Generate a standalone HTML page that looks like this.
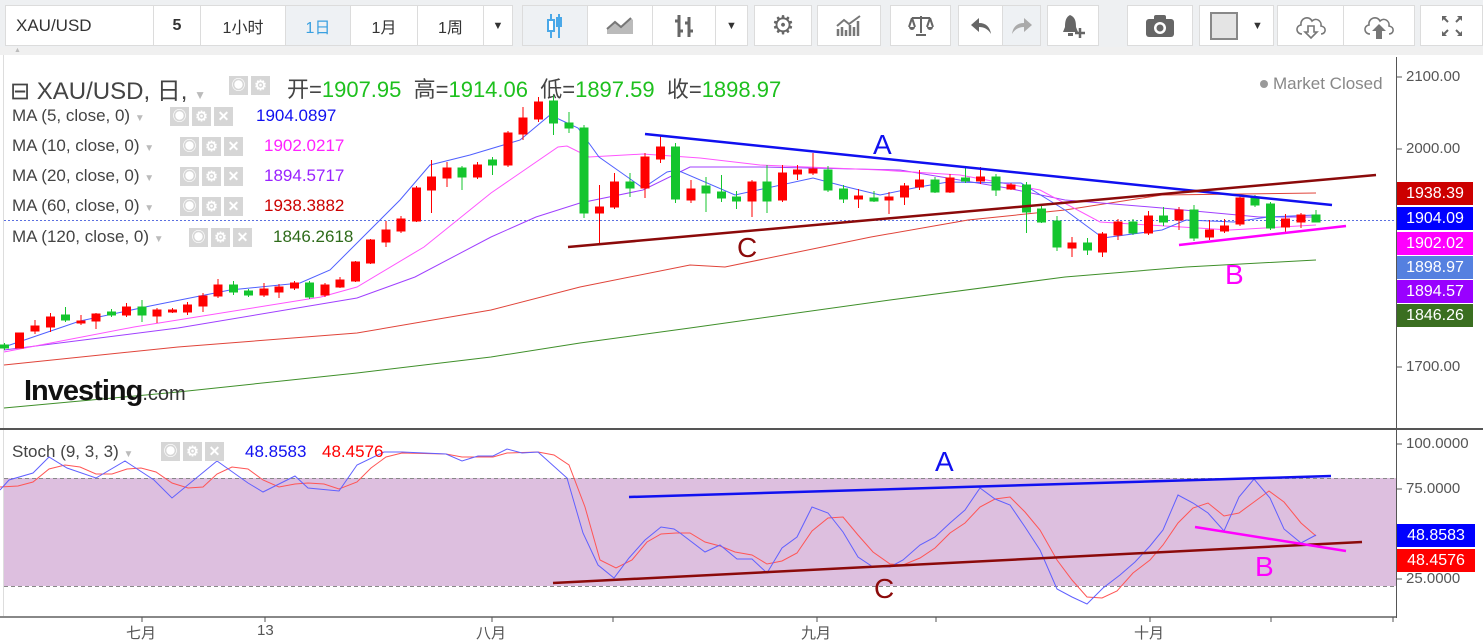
<!DOCTYPE html>
<html><head><meta charset="utf-8"><style>
body{margin:0;width:1483px;height:642px;overflow:hidden;background:#fff;font-family:"Liberation Sans","Noto Sans CJK SC",sans-serif;position:relative}
.t{position:absolute;white-space:nowrap}
.n{font-family:"Liberation Sans Narrow","Liberation Sans","Noto Sans CJK SC",sans-serif}
.tb{position:absolute;top:0;left:0;width:1483px;height:55px;background:#eef0f2}
.b{position:absolute;top:5px;height:41px;background:#fff;border:1px solid #dcdcdc;box-sizing:border-box;display:flex;align-items:center;justify-content:center;font-size:16px;color:#333}
.sel{background:#eef1f4}
.ax{font-size:15px;color:#555}
.lab{position:absolute;left:1397px;width:76px;height:23px;color:#fff;font-size:16px;line-height:23px;text-align:center}
.ic{display:inline-block;width:19px;height:19px;background:#d6d6d6;margin-right:3px;vertical-align:middle;color:#fff;font-size:14px;line-height:19px;text-align:center;font-weight:bold}
</style></head><body>
<div class="tb"></div>
<div class="b n" style="left:5px;width:149px;justify-content:flex-start;padding-left:10px;font-size:17px">XAU/USD</div>
<div class="b" style="left:153px;width:48px;font-weight:bold">5</div>
<div class="b" style="left:200px;width:86px">1小时</div>
<div class="b sel" style="left:285px;width:66px;color:#3aa0e0">1日</div>
<div class="b" style="left:350px;width:68px">1月</div>
<div class="b" style="left:417px;width:67px">1周</div>
<div class="b" style="left:483px;width:30px;font-size:11px">▼</div>
<div class="b sel" style="left:522px;width:66px"><svg width="22" height="26"><path d="M7 1V25M15 1V25" stroke="#4aa8e8" stroke-width="2"/><rect x="4" y="7" width="6" height="11" fill="#fff" stroke="#4aa8e8" stroke-width="2"/><rect x="12" y="4" width="6" height="10" fill="#4aa8e8"/></svg></div>
<div class="b" style="left:587px;width:66px"><svg width="28" height="18"><path d="M1 17L1 12 9 5 15 10 25 1 27 3V17Z" fill="#bbb"/><path d="M1 12L9 5 15 10 25 1" stroke="#777" stroke-width="2" fill="none"/></svg></div>
<div class="b" style="left:652px;width:64px"><svg width="22" height="26"><path d="M6 2V24M6 8H2M16 4V24M16 18H20M6 18H10M16 10H12" stroke="#666" stroke-width="3" fill="none"/></svg></div>
<div class="b" style="left:715px;width:33px;font-size:11px">▼</div>
<div class="b" style="left:754px;width:58px;font-size:26px;color:#666">⚙</div>
<div class="b" style="left:817px;width:64px"><svg width="26" height="22"><path d="M2 21V14M6 21V12M10 21V15M14 21V10M18 21V12M22 21V6" stroke="#777" stroke-width="2.5"/><path d="M1 11L8 5 13 9 24 1" stroke="#777" stroke-width="2" fill="none"/></svg></div>
<div class="b" style="left:890px;width:61px"><svg width="26" height="22"><path d="M13 1V18M4 3H22M4 3L1 12M4 3L7 12M22 3L19 12M22 3L25 12M8 20H18" stroke="#666" stroke-width="2" fill="none"/><path d="M1 12A3 3 0 0 0 7 12ZM19 12A3 3 0 0 0 25 12Z" fill="#666"/></svg></div>
<div class="b" style="left:958px;width:45px"><svg width="22" height="18"><path d="M9 1L1 8 9 15V10C14 10 18 12 21 17 20 10 16 6 9 6Z" fill="#666"/></svg></div>
<div class="b sel" style="left:1002px;width:39px"><svg width="22" height="18"><path d="M13 1L21 8 13 15V10C8 10 4 12 1 17 2 10 6 6 13 6Z" fill="#aaa"/></svg></div>
<div class="b" style="left:1047px;width:52px"><svg width="24" height="26"><path d="M9 2C5 4 4 8 4 14L2 19H17L15 14C15 8 14 4 9 2Z" fill="#666"/><rect x="7" y="20" width="5" height="3" fill="#666"/><path d="M19 15V25M14 20H24" stroke="#666" stroke-width="2.5"/></svg></div>
<div class="b" style="left:1127px;width:66px"><svg width="30" height="24"><rect x="1" y="5" width="28" height="18" rx="3" fill="#666"/><rect x="9" y="1" width="12" height="6" rx="2" fill="#666"/><circle cx="15" cy="14" r="6" fill="#fff"/><circle cx="15" cy="14" r="3.5" fill="#666"/></svg></div>
<div class="b" style="left:1199px;width:75px;justify-content:flex-start;padding-left:10px"><span style="display:inline-block;width:24px;height:24px;background:#e4e4e4;border:2px solid #888"></span><span style="font-size:11px;margin-left:14px">▼</span></div>
<div class="b" style="left:1277px;width:67px"><svg width="34" height="28"><path d="M8 22C2 22 1 14 7 13 6 6 15 3 18 9 22 5 28 9 27 14 33 15 32 22 27 22" fill="none" stroke="#777" stroke-width="1.6"/><path d="M14 14H20V20H23L17 26 11 20H14Z" fill="#fff" stroke="#777" stroke-width="1.6"/></svg></div>
<div class="b" style="left:1343px;width:72px"><svg width="34" height="28"><path d="M8 22C2 22 1 14 7 13 6 6 15 3 18 9 22 5 28 9 27 14 33 15 32 22 27 22" fill="none" stroke="#777" stroke-width="1.6"/><path d="M14 27V19H10L17 12 24 19H20V27Z" fill="#777"/></svg></div>
<div class="b" style="left:1420px;width:63px"><svg width="22" height="22"><path d="M1 1H6L1 6ZM21 1H16L21 6ZM1 21H6L1 16ZM21 21H16L21 16Z" fill="#666"/><path d="M2 2L7 7M20 2L15 7M2 20L7 15M20 20L15 15" stroke="#666" stroke-width="2"/></svg></div>
<div class="t" style="left:0;top:47px;width:1483px;height:8px;background:#f0f0f0"></div>
<div class="t" style="left:14px;top:47px;font-size:7px;color:#bbb">▲</div>

<svg class="t" style="left:0;top:0" width="1483" height="642">
<rect x="0" y="55" width="1483" height="587" fill="#fff"/>
<line x1="3.5" y1="55" x2="3.5" y2="617" stroke="#ddd"/>
<rect x="4" y="478" width="1392" height="108" fill="#ddbfdf"/>
<line x1="4" y1="478.5" x2="1396" y2="478.5" stroke="#888" stroke-dasharray="4,3"/>
<line x1="4" y1="586.5" x2="1396" y2="586.5" stroke="#888" stroke-dasharray="4,3"/>
<line x1="0" y1="429" x2="1483" y2="429" stroke="#555" stroke-width="2"/>
<line x1="0" y1="617" x2="1396" y2="617" stroke="#888" stroke-width="2"/>
<line x1="1396.5" y1="57" x2="1396.5" y2="618" stroke="#555"/>
<g stroke="#555"><line x1="1397" y1="77" x2="1402" y2="77"/><line x1="1397" y1="149" x2="1402" y2="149"/><line x1="1397" y1="367" x2="1402" y2="367"/><line x1="1397" y1="444" x2="1402" y2="444"/><line x1="1397" y1="489" x2="1402" y2="489"/><line x1="1397" y1="579" x2="1402" y2="579"/>
<line x1="142" y1="617" x2="142" y2="622"/><line x1="265" y1="617" x2="265" y2="622"/><line x1="492" y1="617" x2="492" y2="622"/><line x1="613" y1="617" x2="613" y2="622"/><line x1="817" y1="617" x2="817" y2="622"/><line x1="936" y1="617" x2="936" y2="622"/><line x1="1150" y1="617" x2="1150" y2="622"/><line x1="1271" y1="617" x2="1271" y2="622"/><line x1="1393" y1="617" x2="1393" y2="622"/></g>
<line x1="4" y1="220.5" x2="1396" y2="220.5" stroke="#5a6fe0" stroke-dasharray="2,2"/>
<g fill="none" stroke-width="1">
<polyline stroke="#3f8f2a" points="4,408 178,392 357,373 491,357 580,343 690,328 890,300 1065,277 1186,267 1316,260"/>
<polyline stroke="#e0443a" points="4,365 178,347 357,333 491,310 580,287 690,265 725,267 871,237 968,220 1065,210 1162,195 1316,193"/>
<polyline stroke="#a040ff" points="4,350 178,328 357,298 415,277 491,237 536,217 580,203 643,190 690,167 760,167 900,170 1007,188 1065,200 1162,208 1259,217 1316,217"/>
<polyline stroke="#ff55ff" points="4,352 134,327 321,297 357,287 424,247 491,193 558,147 567,146 589,157 643,154 700,158 760,165 880,170 960,175 1040,190 1100,222 1230,230 1316,225"/>
<polyline stroke="#5060ff" points="4,347 80,321 150,306 230,290 300,283 330,270 360,240 400,200 430,165 470,155 520,140 550,115 578,128 599,157 643,188 667,172 677,170 735,195 813,178 847,187 880,195 919,187 948,182 1007,183 1021,183 1065,210 1103,238 1162,230 1186,220 1234,222 1268,217 1316,215"/>
</g>
<g fill="#f00" stroke="#f00" stroke-width="1">
<path d="M19.5 333V348M15.5 333h8V348h-8Z M35 320V334M31 326h8V331h-8Z M50.5 313V332M46.5 317h8V327h-8Z M81 315V325M77 321h8V323h-8Z M96 313V329M92 314h8V321h-8Z M126.5 303V317M122.5 307h8V315h-8Z M157 308V323M153 310h8V316h-8Z M172.5 308V313M168.5 310h8V312h-8Z M187.5 302V315M183.5 305h8V312h-8Z M203 293V312M199 296h8V306h-8Z M218 279V298M214 285h8V296h-8Z M264 283V297M260 289h8V295h-8Z M279 284V298M275 287h8V292h-8Z M294.5 281V290M290.5 283h8V288h-8Z M325 283V297M321 285h8V295h-8Z M340 277V288M336 280h8V287h-8Z M355.5 261V282M351.5 262h8V281h-8Z M370.5 239V264M366.5 240h8V263h-8Z M386 221V247M382 230h8V242h-8Z M401 216V233M397 219h8V231h-8Z M416.5 186V222M412.5 188h8V221h-8Z M431.5 160V213M427.5 177h8V190h-8Z M447 162V187M443 168h8V178h-8Z M477.5 162V179M473.5 165h8V177h-8Z M508 131V167M504 133h8V165h-8Z M523 107V140M519 118h8V134h-8Z M538.5 97V122M534.5 102h8V119h-8Z M599.5 185V245M595.5 207h8V213h-8Z M614.5 173V209M610.5 182h8V207h-8Z M645 153V198M641 157h8V188h-8Z M660.5 136V163M656.5 147h8V159h-8Z M691 180V203M687 189h8V200h-8Z M752 180V217M748 182h8V201h-8Z M782.5 165V202M778.5 173h8V200h-8Z M797.5 165V180M793.5 170h8V174h-8Z M813 153V175M809 169h8V173h-8Z M858.5 189V208M854.5 196h8V199h-8Z M889 192V214M885 197h8V200h-8Z M904.5 183V205M900.5 186h8V197h-8Z M919.5 170V190M915.5 180h8V187h-8Z M950 174V193M946 178h8V192h-8Z M980.5 167V184M976.5 177h8V181h-8Z M1011 183V190M1007 185h8V189h-8Z M1072 237V257M1068 243h8V248h-8Z M1102.5 232V257M1098.5 234h8V252h-8Z M1118 219V240M1114 222h8V235h-8Z M1148.5 211V235M1144.5 216h8V233h-8Z M1179 207V230M1175 210h8V220h-8Z M1209.5 220V240M1205.5 230h8V237h-8Z M1224.5 219V233M1220.5 226h8V231h-8Z M1240 196V226M1236 198h8V224h-8Z M1285.5 214V233M1281.5 219h8V227h-8Z M1301 213V228M1297 215h8V222h-8Z"/>
</g>
<g fill="#14c52e" stroke="#14c52e" stroke-width="1">
<path d="M4.5 343V350M0.5 345h8V348h-8Z M65.5 307V322M61.5 315h8V320h-8Z M111.5 309V317M107.5 312h8V315h-8Z M142 300V322M138 307h8V315h-8Z M233.5 281V295M229.5 285h8V292h-8Z M248.5 289V297M244.5 291h8V295h-8Z M309.5 281V299M305.5 283h8V297h-8Z M462 166V190M458 168h8V177h-8Z M492.5 157V175M488.5 160h8V165h-8Z M553.5 95V135M549.5 101h8V123h-8Z M569 112V133M565 123h8V128h-8Z M584 125V218M580 128h8V213h-8Z M630 173V197M626 182h8V188h-8Z M675.5 143V203M671.5 147h8V199h-8Z M706 177V212M702 186h8V193h-8Z M721.5 175V202M717.5 192h8V198h-8Z M736.5 191V209M732.5 197h8V201h-8Z M767 165V213M763 182h8V201h-8Z M828 166V192M824 170h8V190h-8Z M843.5 185V203M839.5 189h8V199h-8Z M874 191V202M870 198h8V201h-8Z M935 177V193M931 180h8V192h-8Z M965.5 168V183M961.5 178h8V181h-8Z M996 174V196M992 177h8V190h-8Z M1026.5 182V233M1022.5 185h8V212h-8Z M1041.5 205V223M1037.5 209h8V222h-8Z M1057 216V251M1053 221h8V247h-8Z M1087.5 238V255M1083.5 243h8V250h-8Z M1133 219V235M1129 222h8V233h-8Z M1163.5 207V226M1159.5 216h8V222h-8Z M1194 205V241M1190 210h8V238h-8Z M1255 195V207M1251 198h8V205h-8Z M1270.5 202V230M1266.5 204h8V228h-8Z M1316 210V222M1312 215h8V222h-8Z"/>
</g>
<line x1="645" y1="134" x2="1332" y2="205" stroke="#1010f0" stroke-width="2.5"/>
<line x1="568" y1="247" x2="1376" y2="175" stroke="#8b0a0a" stroke-width="2.5"/>
<line x1="1179" y1="245" x2="1346" y2="226" stroke="#ff00ff" stroke-width="2.5"/>
<polyline fill="none" stroke="#ff5555" stroke-width="1" points="0,487 18,486 33,482 49,469 65,465 80,467 96,474 112,474 127,469 141,468 156,472 172,483 188,488 203,487 217,474 232,467 248,469 263,480 279,487 295,484 308,483 324,484 339,489 357,482 371,468 386,457 402,453 446,454 462,457 493,457 507,453 538,452 554,455 569,465 585,507 600,560 616,568 632,560 647,542 661,534 676,533 690,533 705,542 720,546 735,552 752,555 767,564 782,561 797,553 812,531 828,518 843,517 858,535 873,552 890,564 903,565 920,558 935,548 950,533 965,523 980,507 995,499 1010,497 1025,512 1040,530 1057,560 1072,580 1087,597 1102,598 1117,591 1133,573 1150,560 1163,545 1178,523 1193,508 1208,503 1224,516 1239,513 1254,502 1269,491 1284,502 1301,523 1316,536"/>
<polyline fill="none" stroke="#6060ff" stroke-width="1" points="0,490 9,480 33,473 49,457 67,468 96,478 125,461 154,480 172,498 217,461 248,483 263,492 295,476 308,488 339,491 357,465 384,452 402,452 446,454 462,461 478,456 493,456 507,449 522,453 538,452 567,478 583,533 598,565 614,578 629,558 645,540 661,527 674,529 680,533 705,552 720,545 737,559 752,559 767,573 782,548 797,537 812,507 828,513 843,532 858,557 873,567 890,567 903,560 920,545 935,537 950,523 965,510 980,488 995,499 1010,505 1025,527 1040,550 1057,589 1072,597 1087,604 1103,588 1120,575 1135,562 1150,546 1163,530 1178,495 1193,503 1208,513 1224,531 1239,497 1254,479 1270,498 1284,529 1301,543 1316,535"/>
<line x1="629" y1="497" x2="1331" y2="476" stroke="#1010f0" stroke-width="2.5"/>
<line x1="553" y1="583" x2="1362" y2="542" stroke="#8b0a0a" stroke-width="2.5"/>
<line x1="1195" y1="527" x2="1346" y2="551" stroke="#ff00ff" stroke-width="2.5"/>
<circle cx="1264" cy="84" r="4" fill="#999"/>
</svg>

<div class="t" style="left:873px;top:129px;font-size:28px;color:#1010f0">A</div>
<div class="t" style="left:737px;top:232px;font-size:28px;color:#8b0a0a">C</div>
<div class="t" style="left:1225px;top:259px;font-size:28px;color:#ff00ff">B</div>
<div class="t" style="left:935px;top:446px;font-size:28px;color:#1010f0">A</div>
<div class="t" style="left:874px;top:573px;font-size:28px;color:#8b0a0a">C</div>
<div class="t" style="left:1255px;top:551px;font-size:28px;color:#ff00ff">B</div>

<div class="t n" style="left:10px;top:71px;font-size:24px;color:#444">⊟ XAU/USD, 日, <span style="font-size:12px;color:#bbb">▼</span></div>
<div class="t" style="left:229px;top:76px"><span class="ic">◉</span><span class="ic">⚙</span></div>
<div class="t n" style="left:287px;top:72px;font-size:22px;color:#444">开=<span style="color:#1ec01e">1907.95</span>&nbsp; 高=<span style="color:#1ec01e">1914.06</span>&nbsp; 低=<span style="color:#1ec01e">1897.59</span>&nbsp; 收=<span style="color:#1ec01e">1898.97</span></div>
<div class="t n" style="left:1273px;top:74px;font-size:17px;color:#888">Market Closed</div>

<div class="t n" style="left:12px;top:106px;font-size:17px;color:#444">MA (5, close, 0) <span style="font-size:10px;color:#bbb">▼</span></div>
<div class="t" style="left:170px;top:107px"><span class="ic">◉</span><span class="ic">⚙</span><span class="ic">✕</span></div>
<div class="t n" style="left:256px;top:106px;font-size:17px;color:#1010f0">1904.0897</div>
<div class="t n" style="left:12px;top:136px;font-size:17px;color:#444">MA (10, close, 0) <span style="font-size:10px;color:#bbb">▼</span></div>
<div class="t" style="left:180px;top:137px"><span class="ic">◉</span><span class="ic">⚙</span><span class="ic">✕</span></div>
<div class="t n" style="left:264px;top:136px;font-size:17px;color:#ff22ff">1902.0217</div>
<div class="t n" style="left:12px;top:166px;font-size:17px;color:#444">MA (20, close, 0) <span style="font-size:10px;color:#bbb">▼</span></div>
<div class="t" style="left:180px;top:167px"><span class="ic">◉</span><span class="ic">⚙</span><span class="ic">✕</span></div>
<div class="t n" style="left:264px;top:166px;font-size:17px;color:#9a22ff">1894.5717</div>
<div class="t n" style="left:12px;top:196px;font-size:17px;color:#444">MA (60, close, 0) <span style="font-size:10px;color:#bbb">▼</span></div>
<div class="t" style="left:180px;top:197px"><span class="ic">◉</span><span class="ic">⚙</span><span class="ic">✕</span></div>
<div class="t n" style="left:264px;top:196px;font-size:17px;color:#cc0000">1938.3882</div>
<div class="t n" style="left:12px;top:227px;font-size:17px;color:#444">MA (120, close, 0) <span style="font-size:10px;color:#bbb">▼</span></div>
<div class="t" style="left:189px;top:228px"><span class="ic">◉</span><span class="ic">⚙</span><span class="ic">✕</span></div>
<div class="t n" style="left:273px;top:227px;font-size:17px;color:#2e6b1a">1846.2618</div>

<div class="t" style="left:24px;top:375px;font-size:29px;font-weight:bold;color:#111;letter-spacing:-1px">Investing<span style="font-size:20px;font-weight:normal;color:#333;letter-spacing:0">.com</span></div>

<div class="t n" style="left:12px;top:442px;font-size:17px;color:#444">Stoch (9, 3, 3) <span style="font-size:10px;color:#bbb">▼</span></div>
<div class="t" style="left:161px;top:442px"><span class="ic">◉</span><span class="ic">⚙</span><span class="ic">✕</span></div>
<div class="t n" style="left:245px;top:442px;font-size:17px;color:#1010f0">48.8583</div>
<div class="t n" style="left:322px;top:442px;font-size:17px;color:#f00">48.4576</div>

<div class="t ax" style="left:1406px;top:68px">2100.00</div>
<div class="t ax" style="left:1406px;top:140px">2000.00</div>
<div class="t ax" style="left:1406px;top:358px">1700.00</div>
<div class="lab" style="top:182px;background:#cc0000">1938.39</div>
<div class="lab" style="top:207px;background:#0000ff">1904.09</div>
<div class="lab" style="top:232px;background:#ff00ff">1902.02</div>
<div class="lab" style="top:256px;background:#5580e0">1898.97</div>
<div class="lab" style="top:280px;background:#9900ff">1894.57</div>
<div class="lab" style="top:304px;background:#3a6e20">1846.26</div>
<div class="t ax" style="left:1406px;top:435px">100.0000</div>
<div class="t ax" style="left:1406px;top:480px">75.0000</div>
<div class="t ax" style="left:1406px;top:570px">25.0000</div>
<div class="lab" style="top:524px;background:#0000ff;width:78px">48.8583</div>
<div class="lab" style="top:549px;background:#f00;width:78px">48.4576</div>

<div class="t ax" style="left:126px;top:622px">七月</div>
<div class="t ax" style="left:257px;top:622px">13</div>
<div class="t ax" style="left:476px;top:622px">八月</div>
<div class="t ax" style="left:801px;top:622px">九月</div>
<div class="t ax" style="left:1134px;top:622px">十月</div>
</body></html>
